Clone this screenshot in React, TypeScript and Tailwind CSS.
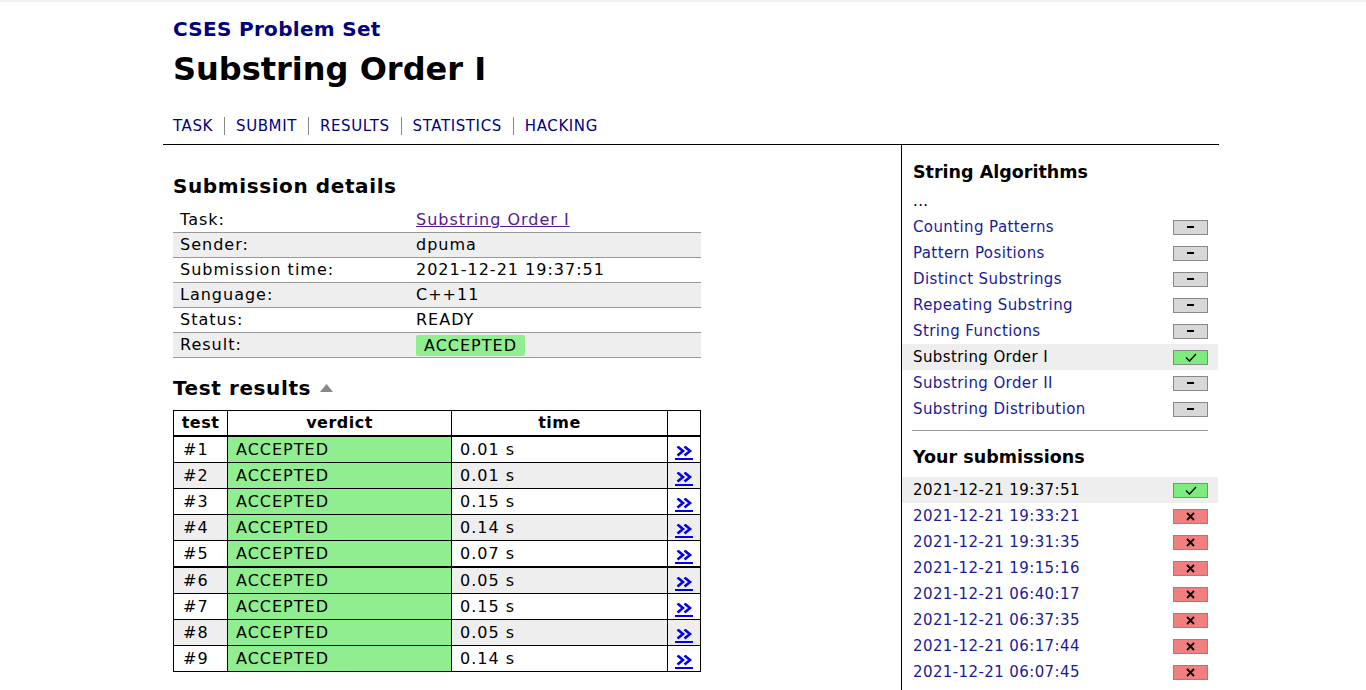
import React from "react";

const navItems = ["TASK", "SUBMIT", "RESULTS", "STATISTICS", "HACKING"];

const details = [
  { label: "Task:", value: "Substring Order I", link: true },
  { label: "Sender:", value: "dpuma" },
  { label: "Submission time:", value: "2021-12-21 19:37:51" },
  { label: "Language:", value: "C++11" },
  { label: "Status:", value: "READY" },
  { label: "Result:", value: "ACCEPTED", badge: true },
];

const tests = [
  { id: 1, time: "0.01 s" },
  { id: 2, time: "0.01 s" },
  { id: 3, time: "0.15 s" },
  { id: 4, time: "0.14 s" },
  { id: 5, time: "0.07 s" },
  { id: 6, time: "0.05 s" },
  { id: 7, time: "0.15 s" },
  { id: 8, time: "0.05 s" },
  { id: 9, time: "0.14 s" },
];

const tasks = [
  { name: "Counting Patterns", done: false },
  { name: "Pattern Positions", done: false },
  { name: "Distinct Substrings", done: false },
  { name: "Repeating Substring", done: false },
  { name: "String Functions", done: false },
  { name: "Substring Order I", done: true, current: true },
  { name: "Substring Order II", done: false },
  { name: "Substring Distribution", done: false },
];

const submissions = [
  { time: "2021-12-21 19:37:51", ok: true, current: true },
  { time: "2021-12-21 19:33:21", ok: false },
  { time: "2021-12-21 19:31:35", ok: false },
  { time: "2021-12-21 19:15:16", ok: false },
  { time: "2021-12-21 06:40:17", ok: false },
  { time: "2021-12-21 06:37:35", ok: false },
  { time: "2021-12-21 06:17:44", ok: false },
  { time: "2021-12-21 06:07:45", ok: false },
];

const ScoreBox = ({ state }: { state: "none" | "ok" | "fail" }) => {
  const bg =
    state === "ok" ? "bg-[#7ced7c]" : state === "fail" ? "bg-[#f08080]" : "bg-[#d8d8d8]";
  return (
    <span
      className={`flex h-[15px] w-[35px] items-center justify-center border border-[#888] ${bg}`}
    >
      {state === "none" && <span className="block h-[2px] w-[7px] bg-black" />}
      {state === "ok" && (
        <svg width="12" height="9" viewBox="0 0 12 9">
          <path d="M1 4.5 L4.5 8 L11 1" fill="none" stroke="black" strokeWidth="1.4" />
        </svg>
      )}
      {state === "fail" && (
        <svg width="9" height="9" viewBox="0 0 9 9">
          <path d="M1 1 L8 8 M8 1 L1 8" fill="none" stroke="black" strokeWidth="1.8" />
        </svg>
      )}
    </span>
  );
};

// the "details" link in each test row: bold double chevron, underlined
const DetailLink = () => (
  <svg className="mx-auto mt-[9px] block" width="18" height="15" viewBox="0 0 18 15">
    <path
      d="M2.5 0.5 L8 5 L2.5 9.5 M9.5 0.5 L15 5 L9.5 9.5"
      fill="none"
      stroke="#0000ee"
      strokeWidth="2.6"
    />
    <rect x="0" y="12" width="18" height="2" fill="#0000ee" />
  </svg>
);

export default function App() {
  return (
    <div className="min-h-[690px] bg-white text-black" style={{ fontFamily: '"DejaVu Sans", Verdana, sans-serif' }}>
      <div className="h-[2px] bg-[#f0f0f0]" />
      <div className="ml-[163px] w-[1056px]">
        <div className="px-[10px]">
          <div className="pt-[14px] text-[20px] font-bold leading-[26px] tracking-[0.3px] text-[#000080]">
            CSES Problem Set
          </div>
          <h1 className="mt-[7px] text-[32px] font-bold leading-[40px]">Substring Order I</h1>
          <div className="mt-[27px] flex h-[20px] items-center text-[15px] tracking-[0.6px] text-[#000080]">
            {navItems.map((item, i) => (
              <span
                key={item}
                className={`flex h-[18px] items-center ${
                  i > 0 ? "border-l border-[#888] pl-[11px]" : ""
                } pr-[11px]`}
              >
                {item}
              </span>
            ))}
          </div>
        </div>
        <div className="mt-[8px] flex border-t border-black">
          <div className="w-[739px] border-r border-black px-[10px] pb-[18px]">
            <h2 className="mt-[28px] text-[20px] font-bold leading-[26px] tracking-[0.6px]">
              Submission details
            </h2>
            <div className="mt-[9px] w-[528px] text-[16px] tracking-[1px]">
              {details.map((row, i) => (
                <div
                  key={row.label}
                  className={`flex h-[25px] items-center border-b border-[#999] ${
                    i % 2 === 1 ? "bg-[#eee]" : "bg-white"
                  }`}
                >
                  <span className="w-[243px] pl-[7px]">{row.label}</span>
                  {row.link ? (
                    <span className="text-[#551a8b] underline">{row.value}</span>
                  ) : row.badge ? (
                    <span className="rounded-[2px] bg-[#90ee90] px-[8px] leading-[21px]">
                      {row.value}
                    </span>
                  ) : (
                    <span>{row.value}</span>
                  )}
                </div>
              ))}
            </div>
            <h2 className="mt-[17px] flex items-center text-[20px] font-bold leading-[26px] tracking-[0.6px]">
              Test results
              <svg className="ml-[9px]" width="13" height="8" viewBox="0 0 13 8">
                <path d="M0 8 L6.5 0 L13 8 Z" fill="#888" />
              </svg>
            </h2>
            <table className="mt-[9px] w-[528px] border-collapse border border-black text-[16px]">
              <thead>
                <tr className="h-[25px] border-b-2 border-black font-bold tracking-[0.5px]">
                  <th className="w-[54px] border border-black leading-[24px]">test</th>
                  <th className="w-[224px] border border-black leading-[24px]">verdict</th>
                  <th className="w-[216px] border border-black leading-[24px]">time</th>
                  <th className="border border-black" />
                </tr>
              </thead>
              <tbody className="tracking-[1px]">
                {tests.map((t, i) => (
                  <tr
                    key={t.id}
                    className={`h-[25px] ${i % 2 === 1 ? "bg-[#eee]" : "bg-white"} ${
                      t.id === 5 ? "border-b-2 border-black" : ""
                    }`}
                  >
                    <td className="border border-black p-0 pl-[9px] leading-[25px]">#{t.id}</td>
                    <td className="border border-black bg-[#90ee90] p-0 pl-[8px] leading-[25px]">
                      ACCEPTED
                    </td>
                    <td className="border border-black p-0 pl-[8px] leading-[25px]">{t.time}</td>
                    <td className="h-[25px] border border-black p-0 align-top">
                      <DetailLink />
                    </td>
                  </tr>
                ))}
              </tbody>
            </table>
          </div>
          <div className="w-[316px] text-[15px] tracking-[0.4px]">
            <h3 className="ml-[11px] mt-[15px] text-[17.5px] font-bold leading-[24px] tracking-normal">
              String Algorithms
            </h3>
            <div className="ml-[11px] mt-[9px] h-[16px] leading-[16px]">...</div>
            <div className="mt-[5px]">
              {tasks.map((t) => (
                <div
                  key={t.name}
                  className={`flex h-[26px] items-center justify-between pl-[11px] pr-[10px] ${
                    t.current ? "bg-[#eee] text-black" : "text-[#1a1a9a]"
                  }`}
                >
                  <span>{t.name}</span>
                  <ScoreBox state={t.done ? "ok" : "none"} />
                </div>
              ))}
            </div>
            <div className="ml-[10px] mr-[10px] mt-[8px] border-t border-[#999]" />
            <h3 className="ml-[11px] mt-[14px] text-[17.5px] font-bold leading-[24px] tracking-normal">
              Your submissions
            </h3>
            <div className="mt-[8px]">
              {submissions.map((s) => (
                <div
                  key={s.time}
                  className={`flex h-[26px] items-center justify-between pl-[11px] pr-[10px] ${
                    s.current ? "bg-[#eee] text-black" : "text-[#1a1a9a]"
                  }`}
                >
                  <span>{s.time}</span>
                  <ScoreBox state={s.ok ? "ok" : "fail"} />
                </div>
              ))}
            </div>
          </div>
        </div>
      </div>
    </div>
  );
}
